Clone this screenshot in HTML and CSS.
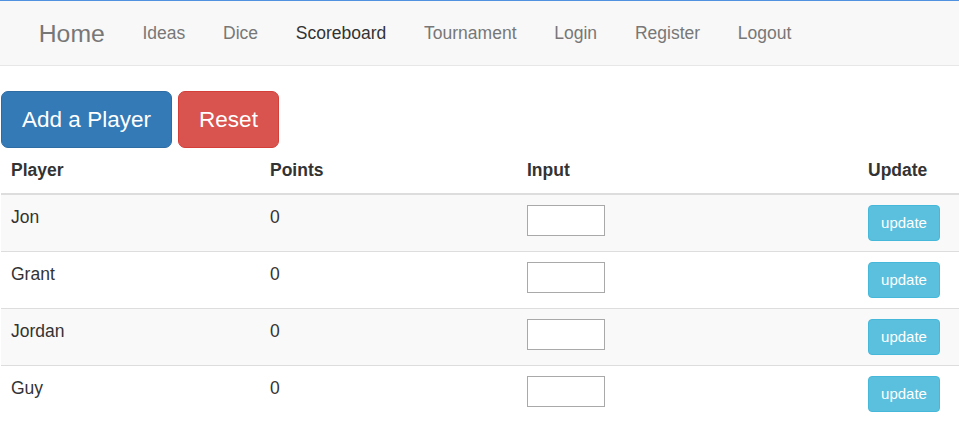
FILE: index.html
```html
<!DOCTYPE html>
<html>
<head>
<meta charset="utf-8">
<title>Scoreboard</title>
<link rel="stylesheet" href="styles.css">
</head>
<body>
<nav class="navbar">
  <a class="brand" href="#">Home</a>
  <ul class="nav">
    <li><a href="#">Ideas</a></li>
    <li><a href="#">Dice</a></li>
    <li class="active"><a href="#">Scoreboard</a></li>
    <li><a href="#">Tournament</a></li>
    <li><a href="#">Login</a></li>
    <li><a href="#">Register</a></li>
    <li><a href="#">Logout</a></li>
  </ul>
</nav>
<main class="content">
  <div class="actions">
    <button class="btn btn-lg btn-primary">Add a Player</button>
    <button class="btn btn-lg btn-danger">Reset</button>
  </div>
  <table class="table">
    <colgroup>
      <col class="c1"><col class="c2"><col class="c3"><col class="c4">
    </colgroup>
    <thead>
      <tr><th>Player</th><th>Points</th><th>Input</th><th>Update</th></tr>
    </thead>
    <tbody>
      <tr><td>Jon</td><td>0</td><td><input class="score-input" type="text"></td><td><button class="btn btn-sm btn-info">update</button></td></tr>
      <tr><td>Grant</td><td>0</td><td><input class="score-input" type="text"></td><td><button class="btn btn-sm btn-info">update</button></td></tr>
      <tr><td>Jordan</td><td>0</td><td><input class="score-input" type="text"></td><td><button class="btn btn-sm btn-info">update</button></td></tr>
      <tr><td>Guy</td><td>0</td><td><input class="score-input" type="text"></td><td><button class="btn btn-sm btn-info">update</button></td></tr>
    </tbody>
  </table>
</main>
</body>
</html>
```
FILE: styles.css
```css
* { box-sizing: border-box; }
html, body { margin: 0; padding: 0; }
body {
  font-family: "Liberation Sans", Arial, sans-serif;
  font-size: 17.5px;
  line-height: 25px;
  color: #333;
  background: #fff;
  border-top: 1px solid #5092e0;
}
.navbar {
  display: flex;
  align-items: center;
  height: 65px;
  background: #f8f8f8;
  border-bottom: 1px solid #e7e7e7;
  padding-left: 20px;
  margin-bottom: 25px;
}
.brand {
  font-size: 24.75px;
  line-height: 25px;
  padding: 0 18.75px;
  color: #777;
  text-decoration: none;
}
.nav {
  display: flex;
  list-style: none;
  margin: 0;
  padding: 0;
}
.nav a {
  display: block;
  padding: 0 18.9px;
  color: #777;
  text-decoration: none;
  line-height: 25px;
}
.nav .active a { color: #333; }
.content { padding-left: 1px; }
.actions { display: flex; gap: 6px; }
.btn {
  font-family: inherit;
  color: #fff;
  border: 1px solid transparent;
  cursor: pointer;
}
.btn-lg {
  font-size: 22.5px;
  line-height: 30px;
  padding: 12px 20px;
  border-radius: 7px;
  height: 57px;
}
.btn-primary { background: #337ab7; border-color: #2e6da4; width: 171px; }
.btn-danger { background: #d9534f; border-color: #d43f3a; width: 101px; }
.btn-sm {
  font-size: 15px;
  line-height: 22px;
  padding: 6px 12px;
  border-radius: 4px;
  height: 36px;
  width: 72px;
}
.btn-info { background: #5bc0de; border-color: #46b8da; }
.table {
  width: 958px;
  border-collapse: collapse;
  table-layout: fixed;
}
.c1 { width: 259px; }
.c2 { width: 257px; }
.c3 { width: 341px; }
.c4 { width: 101px; }
.table th {
  text-align: left;
  font-weight: bold;
  padding: 10px;
  line-height: 25px;
  border-bottom: 2px solid #ddd;
}
.table td {
  padding: 10px;
  vertical-align: top;
  border-top: 1px solid #ddd;
  height: 57px;
}
.table thead + tbody tr:first-child td { border-top: 0; }
.table tbody tr:nth-child(odd) { background: #f9f9f9; }
.score-input {
  display: block;
  width: 78px;
  height: 31px;
  margin: 0;
  border: 1px solid #a9a9a9;
  background: #fff;
  padding: 0 2px;
}
```
